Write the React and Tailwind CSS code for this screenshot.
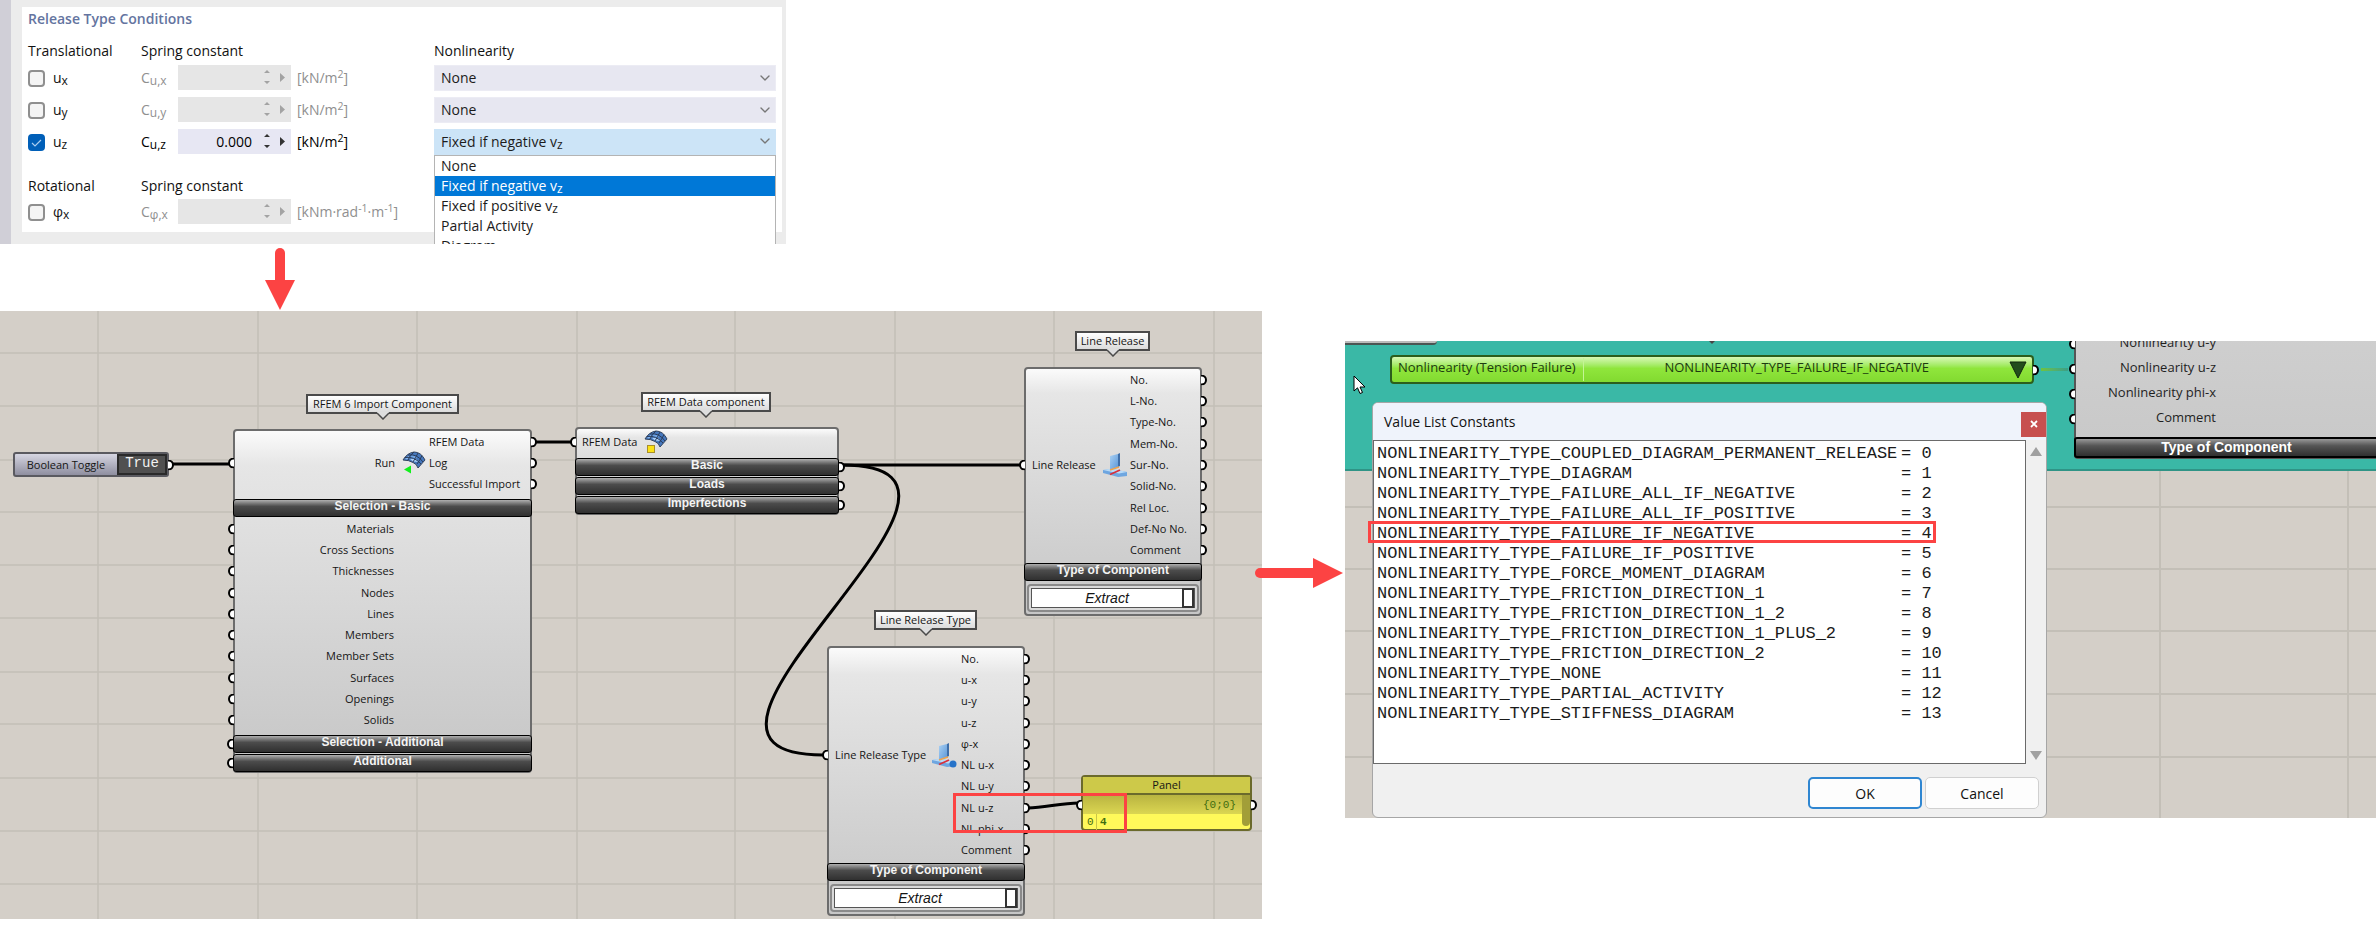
import React from "react";
import { ChevronDown } from "lucide-react";

/* ---------- shared drawings ---------- */

function MeshIcon({ variant }) {
  return (
    <svg className="h-[24px] w-[24px] shrink-0" viewBox="0 0 24 24" aria-hidden="true">
      <path d="M1 9 Q5 2 12 1 Q19 1 23 9 L16 17 Q15 13 11 11.500 Q7 9 1 9 Z" fill="#4577bd" stroke="#33445e" strokeWidth="1" />
      <path d="M8 5 L13 4 L15 7 L9 7.500 Z" fill="#6fa4e4" />
      <path d="M8 8 L14 7.500 L16 11 L11 10.500 Z" fill="#a9cff8" />
      <path d="M3 8 L7 4.500 L8 7 L5 8.500 Z" fill="#86b5ec" />
      <path d="M3 6.500 Q12 5 19 13 M6 4 Q15 2.500 21 11 M6 9 Q8 4 12 1 M11 11 Q14 6 16 2 M15 13 Q18 9 20 4.500" fill="none" stroke="#2a3c5a" strokeWidth="1" />
      {variant === "play" ? (
        <path d="M2 18.500 L9 14.500 V22.500 Z" fill="#12f01c" />
      ) : (
        <rect x="3.500" y="15.500" width="7" height="7" fill="#fbe116" stroke="#a88f2a" />
      )}
    </svg>
  );
}

function HingeIcon({ knob }) {
  return (
    <svg className="h-[26px] w-[26px] shrink-0" viewBox="0 0 26 26" aria-hidden="true">
      <defs>
        <linearGradient id="plate" x1="0" y1="0" x2="1" y2="1">
          <stop offset="0" stopColor="#a9d0f3" />
          <stop offset="1" stopColor="#5b97d8" />
        </linearGradient>
      </defs>
      <path d="M1 18 L10 17 L25 20 V24 L16 25 L1 21 Z" fill="#6ea6e0" />
      <path d="M1 18 L10 16.500 L25 20 L17 21.500 Z" fill="#b9dbf7" />
      <path d="M8 4 L16 2 V15 L8 18 Z" fill="url(#plate)" />
      <path d="M16 2 L18 1 V14 L16 15 Z" fill="#3f6ea8" />
      <path d="M8 18 L17 15" stroke="#f0a24a" strokeWidth="1.500" />
      <path d="M8 22.500 L18 18" stroke="#d8303c" strokeWidth="1.800" />
      {knob && <circle cx="22" cy="22" r="3.500" fill="#2673c9" />}
    </svg>
  );
}

/* ---------- release type dialog ---------- */

function Spinner({ active }) {
  const tone = active ? "#333333" : "#a3a3a3";
  return (
    <svg className="absolute right-[4px] top-[4px] h-[17px] w-[24px]" viewBox="0 0 24 17" aria-hidden="true">
      <path d="M1 4 L4 1 L7 4 Z M1 12 L4 15 L7 12 Z" fill={tone} />
      <path d="M17 4 L22 8.500 L17 13 Z" fill={tone} />
    </svg>
  );
}

function ReleaseRow({ id, symbol, sub, constSub, checked, unit }) {
  const tone = checked ? "text-black" : "text-[#8f8f8f]";
  return (
    <>
      <label htmlFor={id} className="flex h-[26px] items-center gap-2">
        <span className="relative block h-[17px] w-[17px]">
          <input
            id={id}
            type="checkbox"
            defaultChecked={checked}
            className="block h-[17px] w-[17px] appearance-none rounded-[4px] border-2 border-[#8f8f8f] bg-[#f4f4f4] checked:border-[#005fb8] checked:bg-[#005fb8]"
          />
          {checked && (
            <svg className="pointer-events-none absolute inset-0" viewBox="0 0 17 17" aria-hidden="true">
              <path d="M4 9 L7 12 L13 6" fill="none" stroke="#a9cdf0" strokeWidth="1.200" />
            </svg>
          )}
        </span>
        <span>
          {symbol}
          <sub>{sub}</sub>
        </span>
      </label>
      <label htmlFor={id + "-c"} className={"flex h-[26px] items-center " + tone}>
        <span>
          C<sub>{constSub}</sub>
        </span>
      </label>
      <div className="relative h-[25px] w-[113px]">
        <input
          id={id + "-c"}
          type="text"
          disabled={!checked}
          defaultValue={checked ? "0.000" : ""}
          className="h-[25px] w-full bg-[#e7e7f3] pr-[39px] text-right text-black disabled:bg-[#e6e6e6]"
        />
        <Spinner active={checked} />
      </div>
      <div className={"flex h-[26px] items-center " + tone}>{unit}</div>
    </>
  );
}

const kNm2 = (
  <span>
    [kN/m<sup>2</sup>]
  </span>
);

function NoneSelect({ label }) {
  return (
    <div className="relative h-[26px]">
      <select aria-label={label} className="h-[26px] w-full appearance-none border border-[#ececf4] bg-[#e7e7f1] pl-[6px] text-[#1c1c1c]">
        <option>None</option>
      </select>
      <ChevronDown className="pointer-events-none absolute right-[3px] top-[5px] h-4 w-4 text-[#777]" strokeWidth={2} />
    </div>
  );
}

function NegativeCombo() {
  const vz = (
    <>
      v<sub>z</sub>
    </>
  );
  return (
    <div className="relative h-[26px]">
      <button
        type="button"
        aria-haspopup="listbox"
        aria-expanded="true"
        className="flex h-[26px] w-full items-center bg-[#cce4f7] pl-[7px] text-left text-[#1c1c1c]"
      >
        <span>Fixed if negative {vz}</span>
      </button>
      <ChevronDown className="pointer-events-none absolute right-[3px] top-[4px] h-4 w-4 text-[#777]" strokeWidth={2} />
      <ul role="listbox" aria-label="Nonlinearity" className="absolute left-0 top-full z-10 w-full border border-[#b4b4b4] bg-white text-[#1c1c1c]">
        <li role="option" aria-selected="false" className="h-[20px] pl-[6px] leading-[20px]">None</li>
        <li role="option" aria-selected="true" className="h-[20px] bg-[#0078d7] pl-[6px] leading-[20px] text-white">
          Fixed if negative {vz}
        </li>
        <li role="option" aria-selected="false" className="h-[20px] pl-[6px] leading-[20px]">Fixed if positive {vz}</li>
        <li role="option" aria-selected="false" className="h-[20px] pl-[6px] leading-[20px]">Partial Activity</li>
        <li role="option" aria-selected="false" className="h-[20px] pl-[6px] leading-[20px]">Diagram</li>
      </ul>
    </div>
  );
}

const formGrid = "grid grid-cols-[113px_37px_119px_137px_1fr]";

function ReleaseDialog() {
  return (
    <section className="flex h-[244px] w-full max-w-[786px] overflow-hidden bg-[#ececec] text-[14px] leading-[20px] text-[#111] [&_sub]:bottom-[-2px] [&_sub]:text-[12px]">
      <div className="w-[11px] shrink-0 bg-[#d0cfd7]" />
      <div className="ml-[11px] mr-1 mt-[7px] h-[225px] grow bg-white px-[6px]">
        <h2 className="h-[24px] font-semibold leading-[24px] text-[#6474a0]">Release Type Conditions</h2>
        <div className={formGrid + " mt-[10px]"}>
          <span>Translational</span>
          <span className="col-span-3">Spring constant</span>
          <span>Nonlinearity</span>
        </div>
        <div className={formGrid + " mt-1 gap-y-[6px]"}>
          <ReleaseRow id="ux" symbol="u" sub="x" constSub="u,x" unit={kNm2} />
          <NoneSelect label="Nonlinearity for u x" />
          <ReleaseRow id="uy" symbol="u" sub="y" constSub="u,y" unit={kNm2} />
          <NoneSelect label="Nonlinearity for u y" />
          <ReleaseRow id="uz" symbol="u" sub="z" constSub="u,z" checked unit={kNm2} />
          <NegativeCombo />
        </div>
        <div className={formGrid + " mt-[21px]"}>
          <span>Rotational</span>
          <span className="col-span-4">Spring constant</span>
        </div>
        <div className={formGrid + " mt-[3px]"}>
          <ReleaseRow
            id="phix"
            symbol="φ"
            sub="x"
            constSub="φ,x"
            unit={
              <span className="whitespace-nowrap">
                [kNm·rad<sup>-1</sup>·m<sup>-1</sup>]
              </span>
            }
          />
        </div>
      </div>
    </section>
  );
}

/* ---------- node graph pieces ---------- */

function Port({ side }) {
  return side === "left" ? (
    <span className="absolute left-[-7px] top-1/2 h-[11px] w-[6px] -translate-y-1/2 rounded-l-full border-2 border-r-0 border-black bg-white" />
  ) : (
    <span className="absolute right-[-7px] top-1/2 h-[11px] w-[6px] -translate-y-1/2 rounded-r-full border-2 border-l-0 border-black bg-white" />
  );
}

function Bar({ children, left, right }) {
  return (
    <div className="relative mx-[-2px] h-[18px] rounded-[3px] border border-black bg-linear-to-b from-[#b0b0b0] from-0% via-[#4c4c4c] via-40% to-[#303030] text-center font-['Liberation_Sans',sans-serif] text-[12px] font-bold leading-[12px] text-[#f4f4f4]">
      {left && <Port side="left" />}
      {children}
      {right && <Port side="right" />}
    </div>
  );
}

function Tag({ place, children }) {
  return (
    <div className={"absolute flex h-[20px] items-center justify-center border-2 border-[#4a4a4a] bg-linear-to-b from-white to-[#dcdcdc] " + place}>
      <span className="whitespace-nowrap leading-[16px]">{children}</span>
      <svg className="absolute left-1/2 top-[16px] h-[8px] w-[12px] -translate-x-1/2" viewBox="0 0 12 8" aria-hidden="true">
        <path d="M0 0 H12 V1 L6 7 L0 1 Z" fill="#dedede" />
        <path d="M0 1 L6 7 L12 1" fill="none" stroke="#4a4a4a" strokeWidth="1.500" />
      </svg>
    </div>
  );
}

const nodeSkin =
  "absolute rounded-[4px] border-2 border-[#6c6c6c] bg-linear-to-b from-[#fbfbfb] from-0% via-[#e6e6e6] via-10% to-[#c6c6c6] ";

function Outputs({ rows }) {
  return (
    <ul className="flex h-full grow flex-col">
      {rows.map((row) => (
        <li key={row} className="relative flex flex-1 items-center whitespace-nowrap">
          {row}
          <Port side="right" />
        </li>
      ))}
    </ul>
  );
}

function ExtractField() {
  return (
    <div className="mx-px mt-[3px] rounded-[4px] border-2 border-[#8a8a8a] bg-[#d9d9d9] p-[2px]">
      <button
        type="button"
        className="relative flex h-[20px] w-full items-center justify-center border border-[#555] bg-white pr-[12px] font-['Liberation_Sans',sans-serif] text-[14px] italic leading-[18px]"
      >
        Extract
        <span className="absolute right-0 top-[-1px] h-[20px] w-[12px] border-2 border-[#333] bg-white" />
      </button>
    </div>
  );
}

const importInputs = ["Materials", "Cross Sections", "Thicknesses", "Nodes", "Lines", "Members", "Member Sets", "Surfaces", "Openings", "Solids"];
const releaseOutputs = ["No.", "L-No.", "Type-No.", "Mem-No.", "Sur-No.", "Solid-No.", "Rel Loc.", "Def-No No.", "Comment"];
const typeOutputs = ["No.", "u-x", "u-y", "u-z", "φ-x", "NL u-x", "NL u-y", "NL u-z", "NL phi-x", "Comment"];

const gridX = [98, 258, 417, 577, 735, 895, 1054, 1214];
const gridY = [42, 95, 149, 201, 254, 307, 361, 413, 467, 520, 573];

function GraphCanvas() {
  return (
    <section className="relative h-[608px] overflow-hidden bg-[#d4cfc8] text-[11px] leading-[16px] text-[#151515]">
      <svg className="absolute left-0 top-0 h-full w-full" aria-hidden="true">
        {gridX.map((x) => (
          <line key={x} x1={x} x2={x} y1="0" y2="100%" stroke="#c3bfb7" strokeWidth="1.500" />
        ))}
        {gridY.map((y) => (
          <line key={y} x1="0" x2="100%" y1={y} y2={y} stroke="#c3bfb7" strokeWidth="1.500" />
        ))}
        <g fill="none" stroke="#000" strokeWidth="3">
          <path d="M172 153 H231" />
          <path d="M535 131 H572" />
          <path d="M842 154 H1020" />
          <path d="M842 154 C1046 154 619 444 823 444" />
          <path d="M1028 497 C1045 497 1060 492 1079 492" />
        </g>
      </svg>

      <div className="absolute left-[13px] top-[141px] flex h-[25px] w-[156px] items-center rounded-[3px] border-2 border-[#5a5a60] bg-linear-to-b from-[#d6d6e2] to-[#8f8fa0]">
        <span id="toggle-label" className="grow text-center">Boolean Toggle</span>
        <button
          type="button"
          aria-labelledby="toggle-label"
          className="flex h-full w-[50px] justify-center border-2 border-[#2a2a2a] bg-[#505050] font-['Liberation_Mono',monospace] text-[14px] leading-[14px] text-[#f2f2f2]"
        >
          True
        </button>
        <Port side="right" />
      </div>

      <Tag place="left-[306px] top-[83px] w-[153px]">RFEM 6 Import Component</Tag>
      <div className={nodeSkin + "left-[233px] top-[118px] w-[299px]"}>
        <div className="flex h-[68px] pb-1">
          <div className="relative flex w-[194px] items-center justify-end gap-[7px] pr-[3px]">
            <Port side="left" />
            Run
            <MeshIcon variant="play" />
          </div>
          <Outputs rows={["RFEM Data", "Log", "Successful Import"]} />
        </div>
        <Bar>Selection - Basic</Bar>
        <ul className="flex h-[218px] flex-col pb-1 pt-px">
          {importInputs.map((name) => (
            <li key={name} className="relative flex flex-1 items-center">
              <Port side="left" />
              <span className="w-[159px] text-right">{name}</span>
            </li>
          ))}
        </ul>
        <div className="-mb-px flex flex-col gap-px">
          <Bar left>Selection - Additional</Bar>
          <Bar left>Additional</Bar>
        </div>
      </div>

      <Tag place="left-[641px] top-[81px] w-[130px]">RFEM Data component</Tag>
      <div className={nodeSkin + "left-[575px] top-[116px] w-[264px]"}>
        <div className="h-[29px]">
          <div className="relative flex h-[26px] items-center gap-[7px] pl-[5px]">
            <Port side="left" />
            RFEM Data
            <MeshIcon variant="box" />
          </div>
        </div>
        <div className="-mb-px flex flex-col gap-px">
          <Bar right>Basic</Bar>
          <Bar right>Loads</Bar>
          <Bar right>Imperfections</Bar>
        </div>
      </div>

      <Tag place="left-[1075px] top-[20px] w-[75px]">Line Release</Tag>
      <div className={nodeSkin + "left-[1024px] top-[56px] h-[249px] w-[178px]"}>
        <div className="mb-[2px] flex h-[192px]">
          <div className="relative flex w-[104px] items-center gap-[6px] pl-[6px]">
            <Port side="left" />
            <span className="whitespace-nowrap">Line Release</span>
            <HingeIcon />
          </div>
          <Outputs rows={releaseOutputs} />
        </div>
        <Bar>Type of Component</Bar>
        <ExtractField />
      </div>

      <Tag place="left-[874px] top-[299px] w-[103px]">Line Release Type</Tag>
      <div className={nodeSkin + "left-[827px] top-[335px] h-[270px] w-[198px]"}>
        <div className="mb-[2px] flex h-[213px]">
          <div className="relative flex w-[132px] items-center gap-[5px] pl-[6px]">
            <Port side="left" />
            <span className="whitespace-nowrap">Line Release Type</span>
            <HingeIcon knob />
          </div>
          <Outputs rows={typeOutputs} />
        </div>
        <Bar>Type of Component</Bar>
        <ExtractField />
      </div>

      <div className="absolute left-[1081px] top-[464px] w-[171px] rounded-[4px] border-2 border-[#6b6a2c] bg-[#fff95a]">
        <div className="h-[18px] border-b-2 border-[#6b6a2c] bg-[#cdc949] text-center leading-[16px]">Panel</div>
        <div className="relative font-['Liberation_Mono',monospace] text-[11px] text-[#3f6d10]">
          <div className="relative flex h-[19px] items-center justify-end bg-linear-to-b from-[#b9b440] to-[#dbd652] pr-[14px]">
            <Port side="left" />
            {"{0;0}"}
            <Port side="right" />
          </div>
          <div className="flex h-[15px] items-center">
            <span className="w-[14px] border-r border-[#c9c548] pl-[4px]">0</span>
            <span className="pl-[3px] font-bold">4</span>
          </div>
          <span className="absolute right-0 top-0 h-[31px] w-[8px] rounded-b-[4px] bg-[#a29e38]" />
        </div>
      </div>
      <div className="pointer-events-none absolute left-[953px] top-[482px] h-[40px] w-[174px] border-[3px] border-[#fc4343]" />
    </section>
  );
}

/* ---------- value list ---------- */

const constants = [
  "NONLINEARITY_TYPE_COUPLED_DIAGRAM_PERMANENT_RELEASE",
  "NONLINEARITY_TYPE_DIAGRAM",
  "NONLINEARITY_TYPE_FAILURE_ALL_IF_NEGATIVE",
  "NONLINEARITY_TYPE_FAILURE_ALL_IF_POSITIVE",
  "NONLINEARITY_TYPE_FAILURE_IF_NEGATIVE",
  "NONLINEARITY_TYPE_FAILURE_IF_POSITIVE",
  "NONLINEARITY_TYPE_FORCE_MOMENT_DIAGRAM",
  "NONLINEARITY_TYPE_FRICTION_DIRECTION_1",
  "NONLINEARITY_TYPE_FRICTION_DIRECTION_1_2",
  "NONLINEARITY_TYPE_FRICTION_DIRECTION_1_PLUS_2",
  "NONLINEARITY_TYPE_FRICTION_DIRECTION_2",
  "NONLINEARITY_TYPE_NONE",
  "NONLINEARITY_TYPE_PARTIAL_ACTIVITY",
  "NONLINEARITY_TYPE_STIFFNESS_DIAGRAM",
];

function ValueDialog() {
  return (
    <div role="dialog" aria-labelledby="value-title" className="absolute left-[27px] top-[61px] h-[416px] w-[675px] rounded-[6px] border border-[#a6a6a6] bg-[#f0f0f0] text-[14px] text-[#111]">
      <div className="flex h-[37px] items-center justify-between rounded-t-[5px] bg-[#eff3fb] pl-[11px]">
        <h2 id="value-title">Value List Constants</h2>
        <button type="button" aria-label="Close" className="mt-[5px] flex h-[25px] w-[25px] items-center justify-center bg-[#c75050]">
          <svg className="h-[8px] w-[8px]" viewBox="0 0 8 8" aria-hidden="true">
            <path d="M1 1 L7 7 M7 1 L1 7" stroke="#fff" strokeWidth="1.800" />
          </svg>
        </button>
      </div>
      <div className="flex h-[324px]">
        <div className="grow border border-[#6a6a6a] bg-white pl-[3px] pt-[3px]">
          <table className="font-['Liberation_Mono',monospace] text-[17px] leading-[20px] text-[#1b1b1b]">
            <tbody>
              {constants.map((name, value) => (
                <tr key={name} className="h-[20px]">
                  <td className="w-[524px] p-0">{name}</td>
                  <td className="whitespace-nowrap p-0">= {value}</td>
                </tr>
              ))}
            </tbody>
          </table>
        </div>
        <div className="flex w-[20px] flex-col items-center justify-between pb-[4px] pt-[7px]">
          <svg className="h-[9px] w-[12px]" viewBox="0 0 12 9" aria-hidden="true">
            <path d="M6 0 L12 9 H0 Z" fill="#a0a0a0" />
          </svg>
          <svg className="h-[9px] w-[12px]" viewBox="0 0 12 9" aria-hidden="true">
            <path d="M0 0 H12 L6 9 Z" fill="#a0a0a0" />
          </svg>
        </div>
      </div>
      <div className="flex justify-end gap-[3px] pr-[7px] pt-[13px]">
        <button type="button" className="h-[32px] w-[114px] rounded-[5px] border-2 border-[#2f86d1] bg-[#fdfdfd]">OK</button>
        <button type="button" className="h-[32px] w-[114px] rounded-[5px] border border-[#d0d0d0] bg-[#fdfdfd]">Cancel</button>
      </div>
      <div className="pointer-events-none absolute left-[-5px] top-[118px] h-[22px] w-[568px] border-[3px] border-[#fc4343]" />
    </div>
  );
}

function ValueCanvas() {
  return (
    <section className="relative h-[477px] overflow-hidden bg-[#d4cfc8] text-[13px] text-[#1f1f1f]">
      <svg className="absolute left-0 top-0 h-full w-full" aria-hidden="true">
        {[815, 1003].map((x) => (
          <line key={x} x1={x} x2={x} y1="0" y2="100%" stroke="#c3bfb7" strokeWidth="2" />
        ))}
        {[166, 228, 290, 353, 416].map((y) => (
          <line key={y} x1="0" x2="100%" y1={y} y2={y} stroke="#c3bfb7" strokeWidth="2" />
        ))}
      </svg>
      <div className="relative h-[130px] border-b-2 border-[#2f9486] bg-[#3ab8a6]">
        <div className="h-[4px] w-[92px] rounded-br-[4px] border-b-2 border-[#4b5553] bg-[#bcbcbc]" />
      </div>
      <svg className="absolute left-[363px] top-0 h-[4px] w-[8px]" viewBox="0 0 8 4" aria-hidden="true">
        <path d="M1 0 L4 3 L7 0 Z" fill="#454545" />
      </svg>

      <div className="absolute left-[45px] top-[14px] flex h-[29px] w-[644px] items-center rounded-[4px] border-2 border-[#2c5e1c] bg-linear-to-b from-[#d8f8b4] from-0% via-[#90e63c] via-45% to-[#82da30] text-[#1d3b10]">
        <label htmlFor="value-list" className="w-[192px] whitespace-nowrap border-r border-[#c4f595] pb-[3px] pl-[6px]">
          Nonlinearity (Tension Failure)
        </label>
        <button id="value-list" type="button" className="flex h-full grow items-center justify-end gap-[80px] pr-[5px]">
          <span className="pb-[3px]">NONLINEARITY_TYPE_FAILURE_IF_NEGATIVE</span>
          <svg className="h-[18px] w-[18px]" viewBox="0 0 18 18" aria-hidden="true">
            <path d="M1 1 H17 L9 17 Z" fill="#234d1c" stroke="#12280e" strokeWidth="1" />
          </svg>
        </button>
        <Port side="right" />
      </div>
      <div className="absolute left-[696px] top-[27px] h-[3px] w-[27px] bg-linear-to-r from-[#6fc23c] to-[#3a9f86]" />

      <div className="absolute left-[729px] top-[-12px] w-[305px] rounded-[4px] border-2 border-[#555] bg-linear-to-b from-[#cfcfcf] to-[#c8c8c8]">
        <ul className="pb-[6px]">
          {["Nonlinearity u-y", "Nonlinearity u-z", "Nonlinearity phi-x", "Comment"].map((name) => (
            <li key={name} className="relative flex h-[25px] items-center">
              <Port side="left" />
              <span className="w-[140px] pb-[2px] text-right">{name}</span>
            </li>
          ))}
        </ul>
        <div className="mx-[-2px] -mb-px h-[21px] rounded-[3px] border-2 border-black bg-linear-to-b from-[#999] from-0% via-[#555] via-40% to-[#303030] text-center font-['Liberation_Sans',sans-serif] text-[14px] font-bold leading-[17px] text-white">
          Type of Component
        </div>
      </div>

      <svg className="absolute left-[8px] top-[34px] h-[20px] w-[13px]" viewBox="0 0 13 20" aria-hidden="true">
        <path d="M1 1 V16 L4.500 12.800 L7 18.500 L9.500 17.500 L7 12 H12 Z" fill="#fff" stroke="#000" strokeWidth="1" />
      </svg>

      <ValueDialog />
    </section>
  );
}

export default function App() {
  return (
    <main className="grid min-h-screen grid-cols-[1262fr_83px_1031fr] items-start bg-white font-['Open_Sans','Noto_Sans',sans-serif]">
      <div className="min-w-0">
        <ReleaseDialog />
        <svg className="mb-px ml-[265px] mt-1 h-[62px] w-[30px]" viewBox="0 0 30 62" aria-hidden="true">
          <path d="M15 5 V34" stroke="#fc4343" strokeWidth="10" strokeLinecap="round" />
          <path d="M0 32 H30 L15 62 Z" fill="#fc4343" />
        </svg>
        <GraphCanvas />
      </div>
      <div className="relative z-10 -ml-[7px] pt-[558px]">
        <svg className="h-[30px] w-[88px]" viewBox="0 0 88 30" aria-hidden="true">
          <path d="M5 15 H60" stroke="#fc4343" strokeWidth="10" strokeLinecap="round" />
          <path d="M58 0 V30 L88 15 Z" fill="#fc4343" />
        </svg>
      </div>
      <div className="min-w-0 pt-[341px]">
        <ValueCanvas />
      </div>
    </main>
  );
}
